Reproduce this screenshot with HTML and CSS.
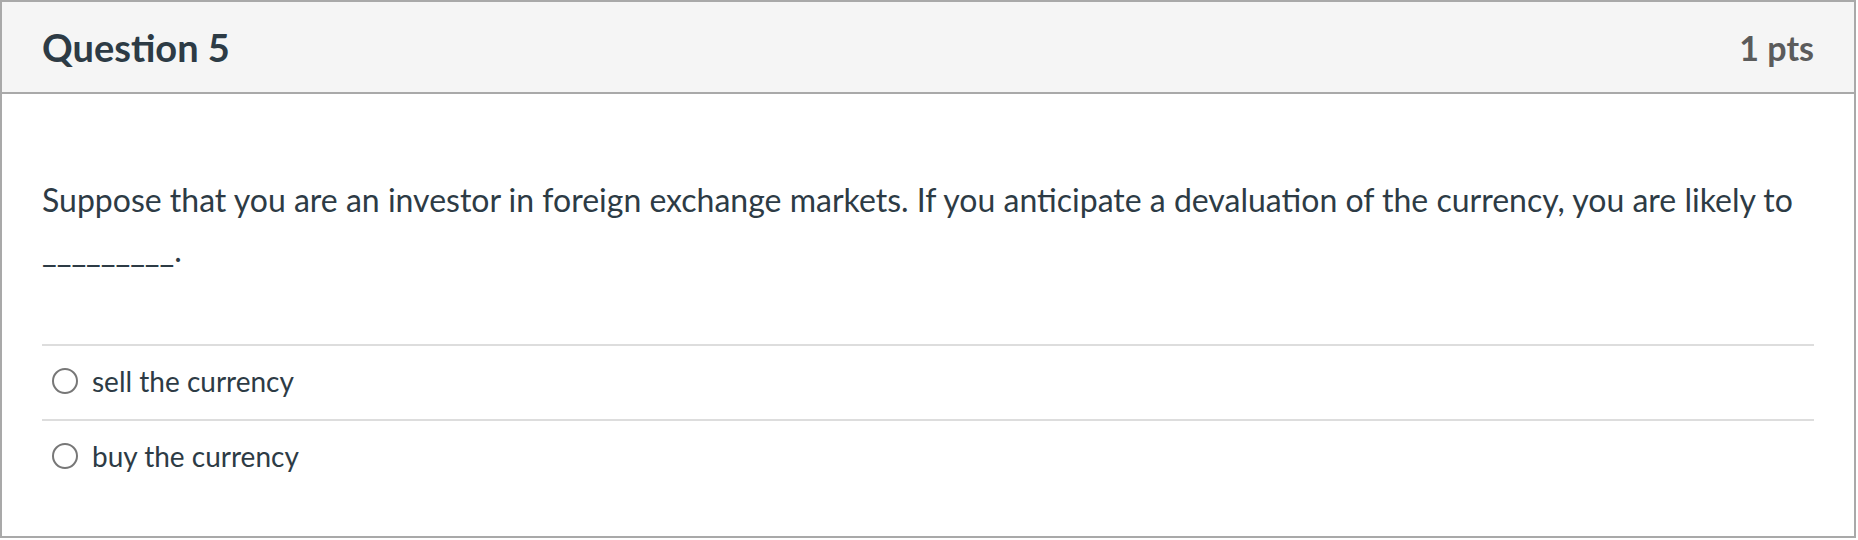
FILE: index.html
```html
<!DOCTYPE html>
<html lang="en">
<head>
<meta charset="utf-8">
<title>Question 5</title>
<link rel="stylesheet" href="styles.css">
</head>
<body>
<div class="question">
  <div class="question-header">
    <h2 class="question-name">Question 5</h2>
    <div class="question-points">1 pts</div>
  </div>
  <div class="question-body">
    <p class="question-text">Suppose that you are an investor in foreign exchange markets. If you anticipate a devaluation of the currency, you are likely to _________.</p>
    <div class="answers">
      <label class="answer">
        <span class="radio"></span>
        <span class="answer-text">sell the currency</span>
      </label>
      <label class="answer">
        <span class="radio"></span>
        <span class="answer-text">buy the currency</span>
      </label>
    </div>
  </div>
</div>
</body>
</html>
```

FILE: styles.css
```css
html, body {
  margin: 0;
  padding: 0;
  background: #ffffff;
}

body {
  font-family: Lato, "Open Sans", "Liberation Sans", sans-serif;
  color: #2d3b45;
}

.question {
  width: 1856px;
  box-sizing: border-box;
  border: 2px solid #a9a9a9;
  background: #ffffff;
}

.question-header {
  height: 90px;
  display: flex;
  align-items: center;
  justify-content: space-between;
  padding: 0 40px;
  background: #f5f5f5;
  border-bottom: 2px solid #a9a9a9;
}

.question-name {
  margin: 0;
  font-size: 38px;
  font-weight: 700;
  line-height: 46px;
  color: #2d3b45;
}

.question-points {
  font-size: 34px;
  font-weight: 700;
  line-height: 41px;
  color: #5b5b5b;
}

.question-body {
  padding: 81px 40px 42px 40px;
}

.question-text {
  margin: 0;
  font-size: 32px;
  line-height: 50px;
}

.answers {
  margin-top: 69px;
}

.answer {
  display: flex;
  align-items: center;
  height: 69px;
  padding-bottom: 4px;
  border-top: 2px solid #dddddd;
  padding-left: 10px;
}

.radio {
  width: 26px;
  height: 26px;
  box-sizing: border-box;
  border: 2px solid #777777;
  border-radius: 50%;
  background: #ffffff;
  flex: none;
}

.answer-text {
  margin-left: 14px;
  font-size: 28px;
  line-height: 34px;
}
```
